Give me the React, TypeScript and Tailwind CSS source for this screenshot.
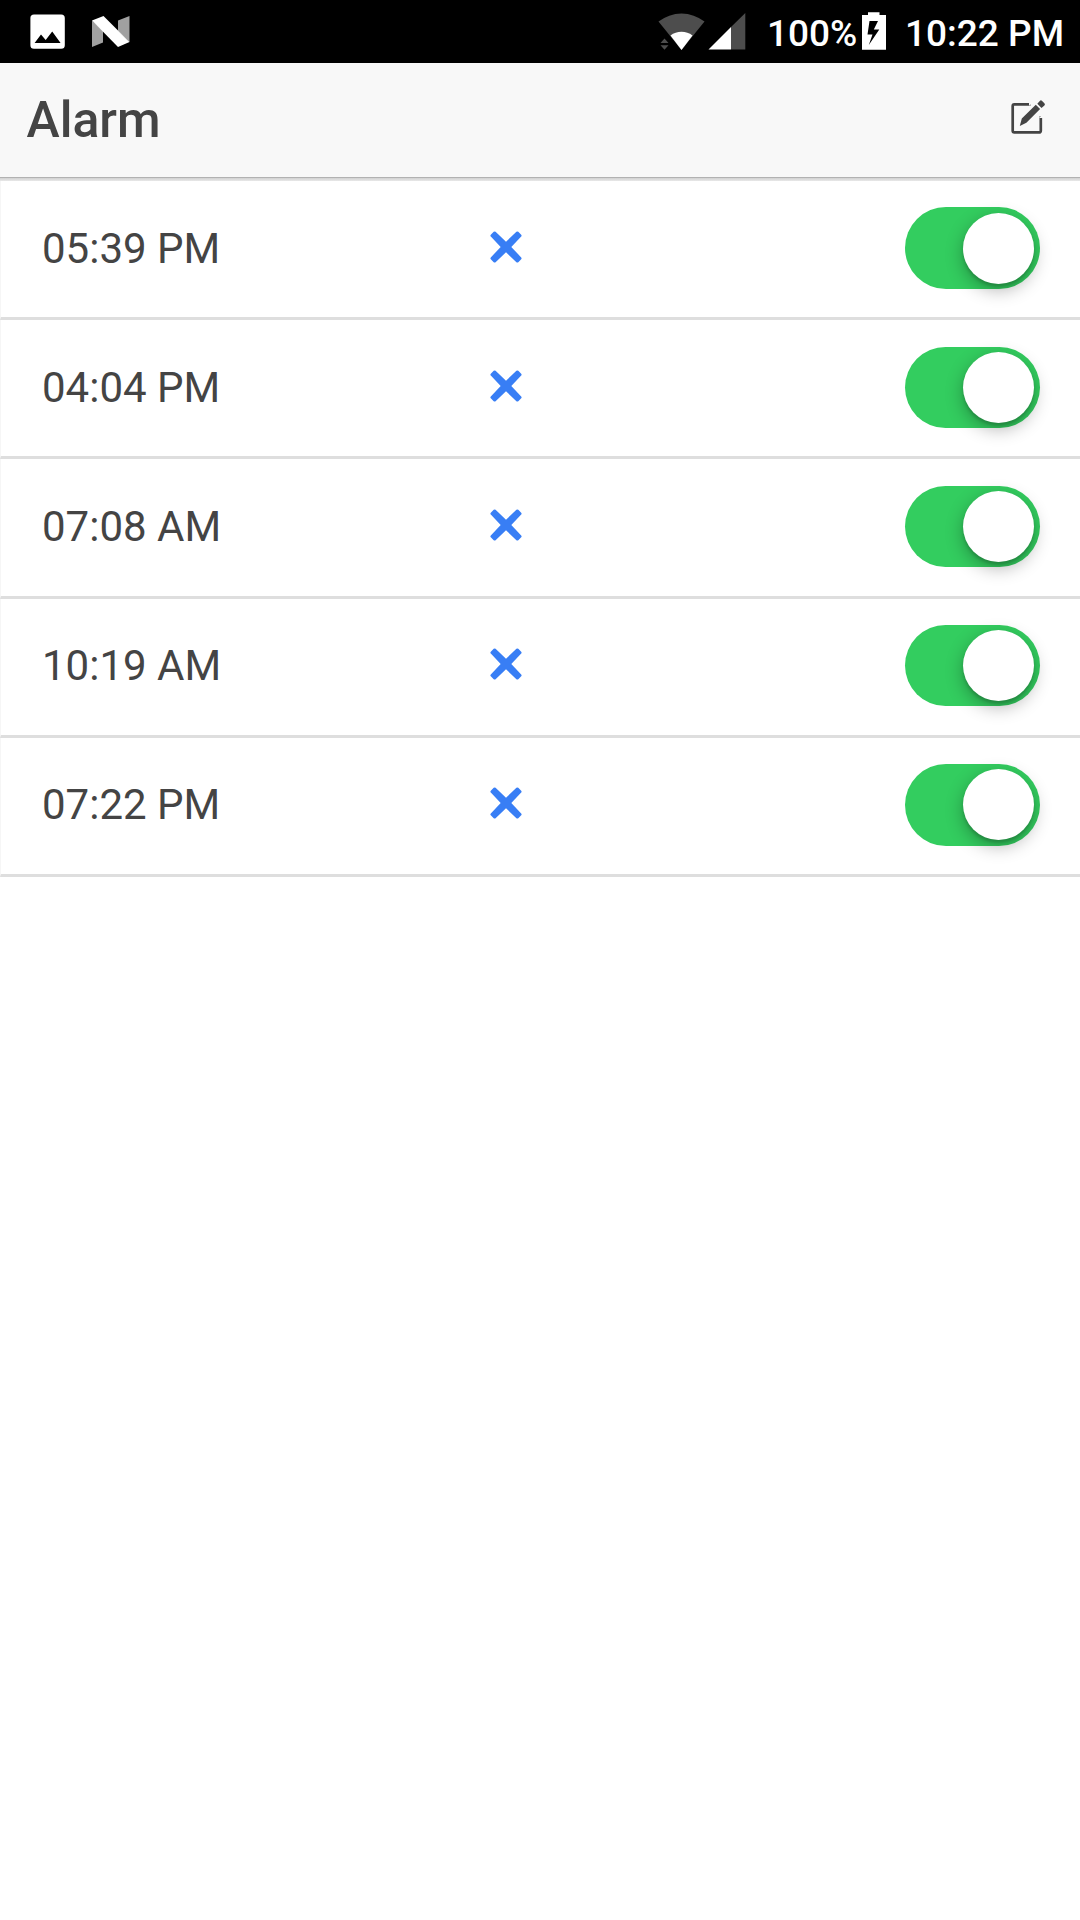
const alarms = ['05:39 PM', '04:04 PM', '07:08 AM', '10:19 AM', '07:22 PM'];

function StatusBar() {
  return (
    <div className="flex h-[63px] items-center justify-between bg-black font-medium text-white">
      <div className="flex h-full">
        <svg className="h-[63px] w-[140px]" viewBox="0 0 140 63" aria-label="Notifications">
          <path
            fillRule="evenodd"
            fill="#fff"
            d="M34 14.4h27.200a3.600 3.600 0 0 1 3.600 3.600v27.200a3.600 3.600 0 0 1-3.600 3.600H34a3.600 3.600 0 0 1-3.600-3.600V18a3.600 3.600 0 0 1 3.600-3.600zM34.600 43h26L52.200 31.600l-6.500 8.500-4.700-5.600z"
          />
          <path fill="#a0a0a0" d="M92 20.500l11 10v12L92 47zM118 20.500L129.500 16v26L118 31z" />
          <path fill="#fff" d="M92 20.500L103.500 16 129.500 42 118 47z" />
        </svg>
      </div>
      <div className="flex h-full items-center">
        <svg className="h-[63px] w-[110px]" viewBox="655 0 110 63" aria-label="Signal">
          <path fill="#4d4d4d" d="M681.500 50L658.500 21.500a37.500 37.500 0 0 1 46 0z" />
          <path fill="#fff" d="M681.500 50L670.500 35.500a18 18 0 0 1 22 0z" />
          <path fill="#4d4d4d" d="M660.500 43l4-4.600 4 4.600zM660.500 45.200h8l-4 4.600zM731 27L745.300 13v36.500H731z" />
          <path fill="#fff" d="M708.500 49.500L731 27v22.500z" />
        </svg>
        <span className="w-[96px] pt-[3px] pl-[2px] font-[Roboto] text-[37px] leading-[63px] whitespace-nowrap">100%</span>
        <svg className="h-[63px] w-[28px]" viewBox="861 0 28 63" aria-label="Battery charging">
          <path
            fillRule="evenodd"
            fill="#fff"
            d="M868 12.300h11.500V15H886v34.800h-24V15h6zM869.500 21l-2 13.500h5L868.800 45l10.500-15.500h-5.500L878 21z"
          />
        </svg>
        <span className="w-[191px] pt-[3px] pl-[16px] font-[Roboto] text-[37px] leading-[63px] whitespace-nowrap">10:22 PM</span>
      </div>
    </div>
  );
}

function Header() {
  return (
    <header className="flex h-[115px] items-center justify-between border-b border-[#b2b2b2] bg-[#f8f8f8] pl-[26.500px]">
      <h1 className="font-[Roboto] text-[50px] leading-[60px] font-medium text-[#444444]">Alarm</h1>
      <button className="mr-[32px] mb-[6px] h-[36px] w-[38px]" aria-label="Edit alarms">
        <svg className="h-[36px] w-[38px]" viewBox="1010 99 38 36" fill="none">
          <path
            d="M1030.500 104.300h-16.200a1.600 1.600 0 0 0-1.600 1.600v24.900a1.600 1.600 0 0 0 1.600 1.600h24.900a1.600 1.600 0 0 0 1.600-1.600v-14.500"
            stroke="#444444"
            strokeWidth="2.700"
          />
          <path fill="#f8f8f8" d="M1029 102h4l-4 4zM1039 118l4-4v4z" />
          <path fill="#444444" d="M1035.800 104.800l4.300 4.300-13.700 13.700-6.600 3.100 2-7.500zM1037.300 103.800l2.500-2.900q1.100-1.200 2.300 0l2.300 2.300q1.100 1.200 0 2.300l-2.900 2.500z" />
        </svg>
      </button>
    </header>
  );
}

function AlarmRow({ time }: { time: string }) {
  return (
    <li className="flex h-[139.200px] items-center border-b-[3px] border-l border-b-[#dedede] border-l-[#f6f6f6] pb-[2px] pl-[41px]">
      <span className="w-[448px] pt-[1px] font-[Roboto] text-[42px] leading-[50px] text-[#444444]">{time}</span>
      <button className="mb-[3px] h-[32px] w-[32px]" aria-label="Delete alarm">
        <svg className="size-[32px]" viewBox="0 0 32 32">
          <path
            fill="#387ef5"
            d="M.8 26.400L10.700 16 .8 5.600Q0 4.600.8 3.700L3.700.8Q4.600 0 5.600.8L16 10.700 26.400.8Q27.400 0 28.300.8L31.200 3.700Q32 4.600 31.200 5.600L21.300 16 31.200 26.400Q32 27.400 31.200 28.300L28.300 31.200Q27.400 32 26.400 31.200L16 21.300 5.600 31.200Q4.600 32 3.700 31.200L.8 28.300Q0 27.400.8 26.400z"
          />
        </svg>
      </button>
      <span
        role="switch"
        aria-checked="true"
        className="mr-[40.500px] ml-auto flex h-[81.500px] w-[134.500px] items-center justify-end rounded-full bg-[#33cd5f] pr-[5.500px]"
      >
        <span className="size-[71px] rounded-full bg-white shadow-[0_6px_18px_rgba(0,0,0,0.3),0_3px_3px_rgba(0,0,0,0.15)]" />
      </span>
    </li>
  );
}

export default function App() {
  return (
    <div className="min-h-[1920px] w-[1080px] bg-white">
      <StatusBar />
      <Header />
      <div className="h-[3px] bg-linear-to-b from-[#d2d2d2] to-[#e8e8e8]" />
      <ul>
        {alarms.map((time) => (
          <AlarmRow key={time} time={time} />
        ))}
      </ul>
    </div>
  );
}
